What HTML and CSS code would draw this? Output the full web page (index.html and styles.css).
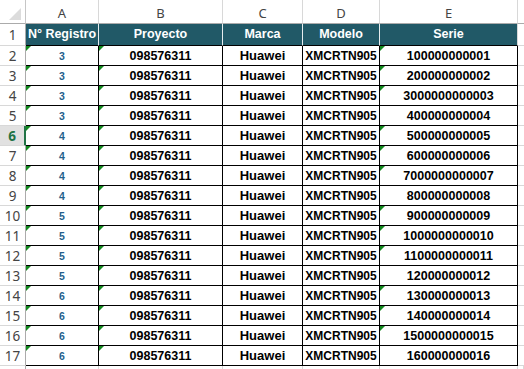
FILE: index.html
```html
<!DOCTYPE html>
<html lang="es">
<head>
<meta charset="utf-8">
<title>Registro</title>
<link rel="stylesheet" href="styles.css">
</head>
<body>
<div class="sheet">
  <div class="corner"><svg width="25" height="23" viewBox="0 0 25 23"><polygon points="21,8 21,20 9,20" fill="#dcdcdc"/></svg></div>
  <div class="colh">A</div><div class="colh">B</div><div class="colh">C</div><div class="colh">D</div><div class="colh">E</div><div class="colh f"></div>

  <div class="rh r1">1</div>
  <div class="th">N° Registro</div><div class="th">Proyecto</div><div class="th">Marca</div><div class="th">Modelo</div><div class="th last">Serie</div><div class="fc r1"></div>

  <div class="rh">2</div><div class="td a tri">3</div><div class="td tri">098576311</div><div class="td c">Huawei</div><div class="td d">XMCRTN905</div><div class="td tri">100000000001</div><div class="fc"></div>
  <div class="rh">3</div><div class="td a tri">3</div><div class="td tri">098576311</div><div class="td c">Huawei</div><div class="td d">XMCRTN905</div><div class="td tri">200000000002</div><div class="fc"></div>
  <div class="rh">4</div><div class="td a tri">3</div><div class="td tri">098576311</div><div class="td c">Huawei</div><div class="td d">XMCRTN905</div><div class="td tri">3000000000003</div><div class="fc"></div>
  <div class="rh">5</div><div class="td a tri">3</div><div class="td tri">098576311</div><div class="td c">Huawei</div><div class="td d">XMCRTN905</div><div class="td">400000000004</div><div class="fc"></div>
  <div class="rh sel">6</div><div class="td a tri">4</div><div class="td tri">098576311</div><div class="td c">Huawei</div><div class="td d">XMCRTN905</div><div class="td tri">500000000005</div><div class="fc"></div>
  <div class="rh">7</div><div class="td a tri">4</div><div class="td tri">098576311</div><div class="td c">Huawei</div><div class="td d">XMCRTN905</div><div class="td tri">600000000006</div><div class="fc"></div>
  <div class="rh">8</div><div class="td a tri">4</div><div class="td tri">098576311</div><div class="td c">Huawei</div><div class="td d">XMCRTN905</div><div class="td tri">7000000000007</div><div class="fc"></div>
  <div class="rh">9</div><div class="td a tri">4</div><div class="td tri">098576311</div><div class="td c">Huawei</div><div class="td d">XMCRTN905</div><div class="td">800000000008</div><div class="fc"></div>
  <div class="rh">10</div><div class="td a tri">5</div><div class="td tri">098576311</div><div class="td c">Huawei</div><div class="td d">XMCRTN905</div><div class="td tri">900000000009</div><div class="fc"></div>
  <div class="rh">11</div><div class="td a tri">5</div><div class="td tri">098576311</div><div class="td c">Huawei</div><div class="td d">XMCRTN905</div><div class="td tri">1000000000010</div><div class="fc"></div>
  <div class="rh">12</div><div class="td a tri">5</div><div class="td tri">098576311</div><div class="td c">Huawei</div><div class="td d">XMCRTN905</div><div class="td tri">1100000000011</div><div class="fc"></div>
  <div class="rh">13</div><div class="td a tri">5</div><div class="td tri">098576311</div><div class="td c">Huawei</div><div class="td d">XMCRTN905</div><div class="td">120000000012</div><div class="fc"></div>
  <div class="rh">14</div><div class="td a tri">6</div><div class="td tri">098576311</div><div class="td c">Huawei</div><div class="td d">XMCRTN905</div><div class="td tri">130000000013</div><div class="fc"></div>
  <div class="rh">15</div><div class="td a tri">6</div><div class="td tri">098576311</div><div class="td c">Huawei</div><div class="td d">XMCRTN905</div><div class="td tri">140000000014</div><div class="fc"></div>
  <div class="rh">16</div><div class="td a tri">6</div><div class="td tri">098576311</div><div class="td c">Huawei</div><div class="td d">XMCRTN905</div><div class="td tri">1500000000015</div><div class="fc"></div>
  <div class="rh">17</div><div class="td a tri">6</div><div class="td tri">098576311</div><div class="td c">Huawei</div><div class="td d">XMCRTN905</div><div class="td">160000000016</div><div class="fc"></div>

  <div class="rh e"></div><div class="ec"></div><div class="ec"></div><div class="ec"></div><div class="ec"></div><div class="ec"></div><div class="ec"></div>
</div>
</body>
</html>
```

FILE: styles.css
```css
html, body {
  margin: 0;
  padding: 0;
  background: #ffffff;
  overflow: hidden;
}

.sheet {
  display: grid;
  grid-template-columns: 26px 73px 124px 80px 77px 138px 1fr;
  grid-template-rows: 24px 22px repeat(17, 20px);
  width: 524px;
  font-family: "Liberation Sans", Arial, sans-serif;
}

.sheet > div {
  box-sizing: border-box;
  display: flex;
  align-items: center;
  justify-content: center;
  white-space: nowrap;
  overflow: hidden;
}

.corner {
  border-right: 1px solid #c6c6c6;
  border-bottom: 1px solid #ababab;
}

.corner svg {
  display: block;
}

.colh {
  border-right: 1px solid #d8d8d8;
  border-bottom: 1px solid #ababab;
  color: #444444;
  font-family: "Noto Sans", "Liberation Sans", sans-serif;
  font-size: 13px;
  padding-top: 2px;
}

.colh.f {
  border-right: none;
}

.rh {
  border-right: 1px solid #ababab;
  border-bottom: 1px solid #d8d8d8;
  color: #444444;
  font-family: "Noto Sans", "Liberation Sans", sans-serif;
  font-size: 13.5px;
  padding-top: 1px;
}

.rh.sel {
  background: #e1e1e1;
  color: #217346;
  font-weight: bold;
  border-right: 2px solid #217346;
}

.rh.e {
  border-bottom: none;
}

.th {
  background: #215967;
  color: #ffffff;
  font-weight: bold;
  font-size: 12.5px;
  border-right: 1px solid #e6ecee;
  border-bottom: 1px solid #000000;
  padding-bottom: 1px;
}

.th.last {
  border-right: 1px solid #d8d8d8;
}

.td {
  position: relative;
  border-right: 1px solid #000000;
  border-bottom: 1px solid #000000;
  color: #000000;
  font-weight: bold;
  font-size: 12.5px;
}

.td.a {
  color: #245f8c;
  font-size: 10.5px;
}

.td.c {
  font-size: 13px;
}

.td.d {
  font-size: 12px;
}

.tri::before {
  content: "";
  position: absolute;
  left: 0;
  top: 0;
  width: 0;
  height: 0;
  border-top: 5px solid #13891f;
  border-right: 5px solid transparent;
}

.fc {
  border-bottom: 1px solid #d8d8d8;
}

.ec {
  border-right: 1px solid #d8d8d8;
}
```
